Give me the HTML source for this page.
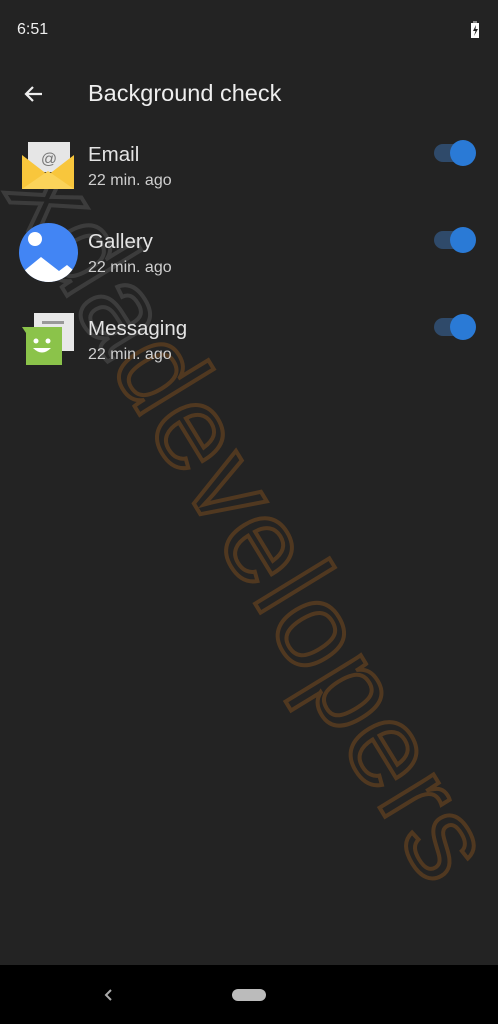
<!DOCTYPE html>
<html><head><meta charset="utf-8"><style>
html,body{margin:0;padding:0}
body{width:498px;height:1024px;background:#232323;position:relative;overflow:hidden;font-family:"Liberation Sans",sans-serif;color:#e6e6e6}
.wm{position:absolute;left:252px;top:520px;transform:translate(-50%,-50%) rotate(58.6deg);font-size:120px;white-space:nowrap;letter-spacing:3px;color:transparent}
.wm .g{-webkit-text-stroke:4px rgba(120,120,120,0.3)}
.wm .b{-webkit-text-stroke:4px rgba(110,70,30,0.6)}
.t{position:absolute;font-size:20.5px;color:#e4e4e4}
.s{position:absolute;font-size:16px;color:#cfcfcf}
.sw{position:absolute;left:434px;width:40px;height:18px;border-radius:9px;background:#2f4a6a}
.sw:after{content:"";position:absolute;right:-2px;top:-4px;width:26px;height:26px;border-radius:50%;background:#2a7ad6}
.nav{position:absolute;left:0;top:965px;width:498px;height:59px;background:#000}
</style></head><body>
<div class="wm"><span class="g">xda</span><span class="b">developers</span></div>
<div style="position:absolute;left:17px;top:21px;font-size:16px;color:#eee">6:51</div>
<svg style="position:absolute;left:470px;top:21px" width="11" height="17" viewBox="0 0 11 17"><rect x="3" y="0" width="4" height="2" fill="#888"/><rect x="1" y="2" width="8" height="15" fill="#fff"/><path d="M6 4L3 10h2.5L4 15l4-7H5.5z" fill="#222"/></svg>
<svg style="position:absolute;left:22px;top:82px" width="24" height="24" viewBox="0 0 24 24"><path d="M20 12H5M11 5l-7 7 7 7" stroke="#eee" stroke-width="2.2" fill="none"/></svg>
<div style="position:absolute;left:88px;top:80px;font-size:23.5px;color:#eee">Background check</div>

<svg style="position:absolute;left:20px;top:137px" width="56" height="54" viewBox="0 0 56 54"><rect x="8" y="5" width="42" height="30" fill="#e6e6e6"/><text x="29" y="27" font-size="16" fill="#777" text-anchor="middle" font-family="Liberation Sans">@</text><path d="M2 18L28 38L54 18V52H2Z" fill="#f8c63c"/><path d="M2 52L28 34L54 52Z" fill="#fbd35a"/></svg>
<div class="t" style="left:88px;top:143px">Email</div>
<div class="s" style="left:88px;top:172px">22 min. ago</div>
<div class="sw" style="top:144px"></div>

<svg style="position:absolute;left:19px;top:223px" width="59" height="59" viewBox="0 0 59 59"><defs><clipPath id="c"><circle cx="29.5" cy="29.5" r="29.5"/></clipPath></defs><circle cx="29.5" cy="29.5" r="29.5" fill="#4285f4"/><g clip-path="url(#c)"><path d="M0 52L22 34L40 48L48 42L60 52V60H0Z" fill="#fff"/></g><circle cx="16" cy="16" r="7" fill="#fff"/></svg>
<div class="t" style="left:88px;top:230px">Gallery</div>
<div class="s" style="left:88px;top:259px">22 min. ago</div>
<div class="sw" style="top:231px"></div>

<svg style="position:absolute;left:20px;top:313px" width="56" height="54" viewBox="0 0 56 54"><rect x="14" y="0" width="40" height="38" fill="#e8e8e8"/><rect x="22" y="8" width="22" height="3" fill="#999"/><path d="M2 14H42V52H6V20Z" fill="#8bc34a"/><circle cx="16" cy="28" r="2.5" fill="#fff"/><circle cx="28" cy="28" r="2.5" fill="#fff"/><path d="M13 35Q22 44 31 35Z" fill="#fff"/></svg>
<div class="t" style="left:88px;top:317px">Messaging</div>
<div class="s" style="left:88px;top:346px">22 min. ago</div>
<div class="sw" style="top:318px"></div>

<div class="nav"><svg style="position:absolute;left:102px;top:23px" width="12" height="14" viewBox="0 0 12 14"><path d="M9 2L4 7l5 5" stroke="#aaa" stroke-width="2" fill="none"/></svg><div style="position:absolute;left:232px;top:24px;width:34px;height:12px;border-radius:6px;background:#bbb"></div></div>
</body></html>
